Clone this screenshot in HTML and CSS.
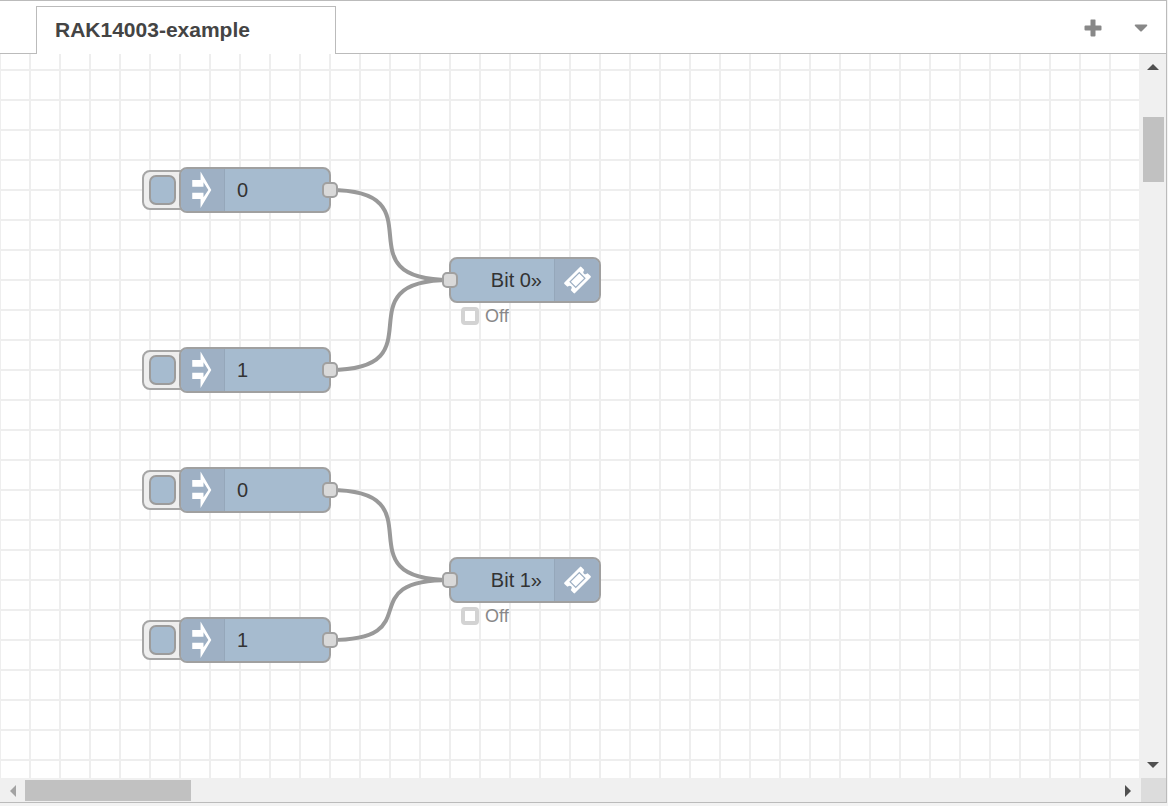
FILE: index.html
```html
<!DOCTYPE html>
<html lang="en">
<head>
<meta charset="utf-8">
<title>Flow editor</title>
<link rel="stylesheet" href="styles.css">
</head>
<body>
<svg class="defs" aria-hidden="true">
  <symbol id="inject" viewBox="0 0 44 42">
    <path fill="#fff" fill-rule="evenodd" d="M11.500 10.700H20V2L31 21 20 39.500V30.300H11.500V23.700H23V28.500L28 21 23 13V17.700H11.500Z"/>
  </symbol>
  <symbol id="ticket" viewBox="0 0 44 42">
    <g transform="translate(22.500 21) rotate(-45)">
      <path fill="#fff" stroke="#fff" stroke-width="2" stroke-linejoin="round" d="M-11 -6.500H11V-3A3 3 0 0 0 11 3V6.500H-11V3A3 3 0 0 0 -11 -3Z"/>
      <rect x="-6.500" y="-4" width="13" height="8" fill="none" stroke="#9eb0c4" stroke-width="1.200"/>
    </g>
  </symbol>
</svg>
<main class="editor">
  <header class="tabs">
    <div class="tab"><a class="tab-link" href="#flow">RAK14003-example</a></div>
    <div class="tab-tools">
      <button class="tool" type="button" aria-label="Add flow"><svg width="18" height="18" viewBox="0 0 18 18"><path fill="#888" d="M7 .5H11Q11.500 .5 11.500 1V6.500H16.500Q17.500 6.500 17.500 7.500V10.500Q17.500 11.500 16.500 11.500H11.500V16.500Q11.500 17.500 10.500 17.500H7.500Q6.500 17.500 6.500 16.500V11.500H1.500Q.5 11.500 .5 10.500V7.500Q.5 6.500 1.500 6.500H6.500V1Q6.500 .5 7 .5Z"/></svg></button>
      <button class="tool" type="button" aria-label="List flows"><svg width="14" height="8" viewBox="0 0 14 8"><path fill="#888" d="M1.500 .5H12.500Q14 .8 13 2L8 7Q7 8 6 7L1 2Q0 .8 1.500 .5Z"/></svg></button>
    </div>
  </header>
  <div class="workspace">
    <section class="canvas" id="flow">
      <svg class="wires" aria-hidden="true">
        <path d="M330 136C442 136 338 226 450 226"/>
        <path d="M330 316C442 316 338 226 450 226"/>
        <path d="M330 436C442 436 338 526 450 526"/>
        <path d="M330 586C431 586 349 526 450 526"/>
      </svg>
      <div class="inject at-1">
        <button class="trigger" type="button" aria-label="Inject 0"><span class="trigger-face"></span></button>
        <div class="node"><svg class="icon left"><use href="#inject"/></svg><span class="label">0</span></div>
        <span class="port out"></span>
      </div>
      <div class="inject at-2">
        <button class="trigger" type="button" aria-label="Inject 1"><span class="trigger-face"></span></button>
        <div class="node"><svg class="icon left"><use href="#inject"/></svg><span class="label">1</span></div>
        <span class="port out"></span>
      </div>
      <div class="inject at-3">
        <button class="trigger" type="button" aria-label="Inject 0"><span class="trigger-face"></span></button>
        <div class="node"><svg class="icon left"><use href="#inject"/></svg><span class="label">0</span></div>
        <span class="port out"></span>
      </div>
      <div class="inject at-4">
        <button class="trigger" type="button" aria-label="Inject 1"><span class="trigger-face"></span></button>
        <div class="node"><svg class="icon left"><use href="#inject"/></svg><span class="label">1</span></div>
        <span class="port out"></span>
      </div>
      <div class="output at-5">
        <div class="node end"><span class="label">Bit 0»</span><svg class="icon right"><use href="#ticket"/></svg></div>
        <div class="status"><span class="ring"></span>Off</div>
        <span class="port in"></span>
      </div>
      <div class="output at-6">
        <div class="node end"><span class="label">Bit 1»</span><svg class="icon right"><use href="#ticket"/></svg></div>
        <div class="status"><span class="ring"></span>Off</div>
        <span class="port in"></span>
      </div>
    </section>
    <div class="bar vertical">
      <button class="arrow" type="button" aria-label="Scroll up"><svg width="12" height="6"><path fill="#505050" d="M0 6L6 0L12 6Z"/></svg></button>
      <div class="track"><div class="thumb"></div></div>
      <button class="arrow" type="button" aria-label="Scroll down"><svg width="12" height="6"><path fill="#505050" d="M0 0H12L6 6Z"/></svg></button>
    </div>
    <div class="bar horizontal">
      <button class="arrow" type="button" aria-label="Scroll left"><svg width="6" height="12"><path fill="#a3a3a3" d="M6 0V12L0 6Z"/></svg></button>
      <div class="track"><div class="thumb"></div></div>
      <button class="arrow" type="button" aria-label="Scroll right"><svg width="6" height="12"><path fill="#505050" d="M0 0V12L6 6Z"/></svg></button>
    </div>
    <div class="corner"></div>
  </div>
</main>
</body>
</html>
```

FILE: styles.css
```css
* { box-sizing: border-box; }

body {
  margin: 0;
  height: 100vh;
  padding: 0 1px 3px 0;
  background: #f3f3f3;
  font-family: "Liberation Sans", Arial, sans-serif;
  font-size: 20px;
  color: #333;
  overflow: hidden;
}

button { border: 0; padding: 0; background: none; }
svg { display: block; }
.defs { display: none; }

.editor {
  height: 100%;
  display: flex;
  flex-direction: column;
  border: 1px solid #bbb;
  border-left: 0;
  background: #fff;
}

.tabs {
  display: flex;
  justify-content: space-between;
  height: 53px;
  padding: 5px 18px 0 36px;
  box-shadow: inset 0 -1px #bbb;
}

.tab {
  width: 300px;
  padding-left: 18px;
  border: 1px solid #bbb;
  border-bottom: 0;
  background: #fff;
}

.tab-link {
  font-size: 21px;
  line-height: 46px;
  font-weight: bold;
  color: #444;
  text-decoration: none;
}

.tab-tools { display: flex; align-items: center; gap: 32px; padding-bottom: 4px; }

.workspace {
  flex: 1;
  min-height: 0;
  display: grid;
  grid-template-columns: 1fr 27px;
  grid-template-rows: 1fr 24px;
}

.canvas {
  position: relative;
  overflow: hidden;
  background-color: #fff;
  background-image:
    linear-gradient(to right, #eee 2px, transparent 2px),
    linear-gradient(to bottom, #eee 2px, transparent 2px);
  background-size: 30px 30px;
  background-position: -1px 15px;
}

.wires { position: absolute; inset: 0; width: 100%; height: 100%; fill: none; stroke: #999; stroke-width: 4; }

.inject { position: absolute; left: 142px; width: 189px; display: flex; align-items: center; }
.output { position: absolute; left: 449px; width: 152px; }
.at-1 { top: 113px; }
.at-2 { top: 293px; }
.at-3 { top: 413px; }
.at-4 { top: 563px; }
.at-5 { top: 203px; }
.at-6 { top: 503px; }

.trigger {
  width: 48px;
  height: 40px;
  margin-right: -11px;
  padding-left: 5px;
  border: 2px solid #a6a6a6;
  border-radius: 8px;
  background: #eee;
}

.trigger-face {
  display: block;
  width: 27px;
  height: 30px;
  border: 2px solid #9c9c9c;
  border-radius: 7px;
  background: #a6bbcf;
}

.node {
  position: relative;
  width: 152px;
  height: 46px;
  display: flex;
  align-items: center;
  border: 2px solid #a0a0a0;
  border-radius: 8px;
  background: #a6bbcf;
  overflow: hidden;
}

.node.end { justify-content: flex-end; }
.icon { flex: none; width: 44px; height: 42px; background: #9eb0c4; }
.icon.left { border-right: 1px solid #95a7ba; }
.icon.right { width: 45px; border-left: 1px solid #95a7ba; }
.label { padding: 0 12px; line-height: 24px; }

.port {
  position: absolute;
  top: 15px;
  width: 16px;
  height: 16px;
  border: 2px solid #a0a0a0;
  border-radius: 5px;
  background: #d9d9d9;
}

.out { right: -7px; }
.in { left: -7px; }

.status {
  display: flex;
  align-items: center;
  gap: 6px;
  padding: 3px 0 0 12px;
  font-size: 18px;
  line-height: 20px;
  color: #888;
}

.ring { width: 18px; height: 18px; border: 4px solid #d3d3d3; border-radius: 4px; }

.bar { display: flex; background: #f0f0f0; }
.vertical { flex-direction: column; padding-left: 2px; }
.arrow { flex: none; display: flex; align-items: center; justify-content: center; width: 24px; height: 26px; }
.horizontal { padding-right: 1px; }
.horizontal .arrow { width: 25px; height: 25px; }
.horizontal .arrow:last-child { width: 20px; }
.track { flex: 1; }
.thumb { background: #c1c1c1; }
.vertical .thumb { width: 21px; height: 65px; margin: 37px 0 0 2px; }
.horizontal .thumb { width: 166px; height: 21px; margin-top: 2px; }
.corner { border-left: 2px solid #f0f0f0; background: #dcdcdc; }
```
